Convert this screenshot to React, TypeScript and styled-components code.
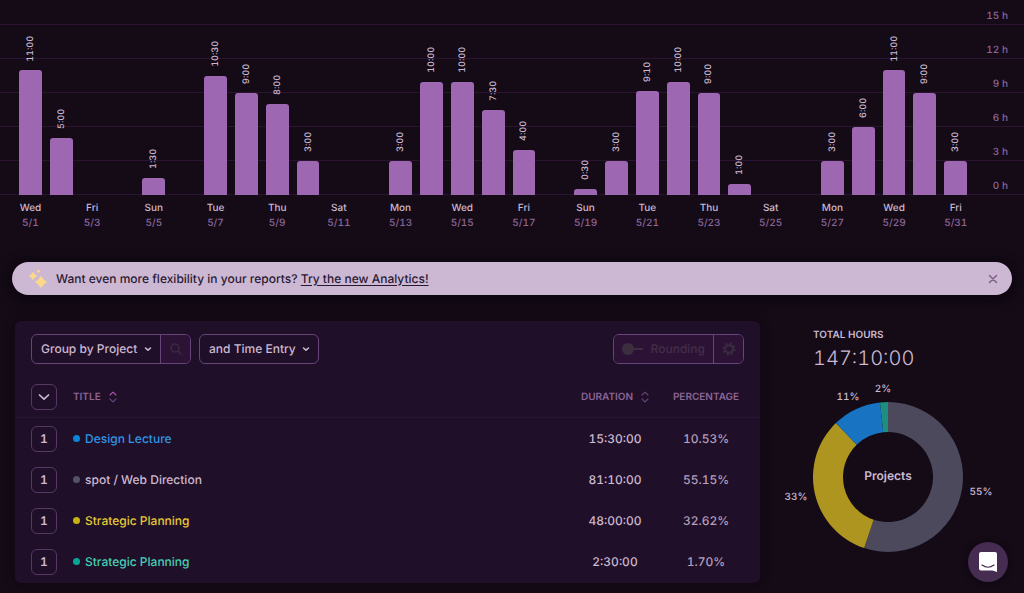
import React from "react";
import styled, { createGlobalStyle } from "styled-components";

const GlobalStyle = createGlobalStyle`
  *, *::before, *::after { box-sizing: border-box; }
  body {
    margin: 0;
    background: #140b17;
    color: #cbb9d2;
    font-family: Inter, "Liberation Sans", sans-serif;
    font-size: 12px;
    line-height: 16px;
    font-weight: 450;
    font-feature-settings: "tnum" 1;
    text-rendering: geometricPrecision;
    -webkit-font-smoothing: antialiased;
  }
  button, select, input { font: inherit; font-feature-settings: inherit; text-rendering: inherit; color: inherit; margin: 0; padding: 0; }
  button { cursor: pointer; }
`;

const Page = styled.main`
  display: flex;
  flex-direction: column;
`;

/* ---------- Bar chart ---------- */

const Chart = styled.section`
  display: flex;
  flex-direction: column;
  font-weight: 500;
`;

const Plot = styled.div`
  display: grid;
  grid-template: 195px / 1fr;
`;

const Scale = styled.div`
  grid-area: 1 / 1;
  display: flex;
  flex-direction: column;
`;

const ScaleLine = styled.div`
  display: flex;
  flex: 0 0 34px;
  align-items: flex-end;
  justify-content: flex-end;
  padding: 0 16px 0 0;
  border-bottom: 1px solid #2a1431;
  color: #8c6597;
  font-size: 10px;

  &:first-child { flex-basis: 25px; }
`;

const Bars = styled.div`
  grid-area: 1 / 1;
  display: flex;
  align-items: flex-end;
  align-self: end;
  height: 170px;
  padding: 0 53px 0 15px;
`;

const BarSlot = styled.div`
  display: flex;
  flex: 1 1 0;
  flex-direction: column;
  align-items: center;
  justify-content: flex-end;
  height: 100%;
  padding: 0 4px;
`;

const BarLabel = styled.span`
  writing-mode: vertical-rl;
  transform: rotate(180deg);
  margin-bottom: 9px;
  font-size: 9px;
  line-height: 13px;
`;

const Bar = styled.div`
  flex: none;
  width: 100%;
  border-radius: 3px 3px 0 0;
  background: #9e67b1;
`;

const Days = styled.div`
  display: flex;
  padding: 6px 53px 0 15px;
`;

const Day = styled.div`
  display: flex;
  flex: 1 1 0;
  flex-direction: column;
  align-items: center;
  min-width: 0;
  min-height: 30px;
  font-size: 10px;
  line-height: 15px;
  white-space: nowrap;
`;

const DayDate = styled.span`
  color: #8c6597;
`;

/* ---------- Banner ---------- */

const Banner = styled.section`
  display: flex;
  align-items: center;
  height: 33px;
  margin: 31px 12px 0;
  padding: 0 14px 0 16px;
  border-radius: 17px;
  background: #cdb8d4;
  color: #2a1832;
  box-shadow: 0 2px 12px 3px #0c050e;
`;

const BannerText = styled.p`
  flex: 1;
  margin: 0 0 0 8px;
`;

const BannerLink = styled.a`
  color: inherit;
  text-decoration: underline;
  text-underline-offset: 2px;
`;

const CloseButton = styled.button`
  display: flex;
  border: 0;
  background: none;
  color: #86618f;
`;

/* ---------- Report card ---------- */

const Report = styled.div`
  display: flex;
  align-items: flex-start;
  padding: 26px 0 10px 15px;
`;

const Card = styled.section`
  flex: 1;
  min-width: 0;
  padding-bottom: 1px;
  border-radius: 6px;
  background: #200f28;
  box-shadow: 0 0 8px 2px #110813;
`;

const Toolbar = styled.div`
  display: flex;
  align-items: center;
  gap: 8px;
  padding: 13px 16px;
`;

const Spacer = styled.div`
  flex: 1;
`;

const Group = styled.div`
  display: flex;
  height: 30px;
  border: 1px solid #67447a;
  border-radius: 6px;
  overflow: hidden;
`;

const SelectWrap = styled.div`
  display: grid;
  align-items: center;
`;

const Select = styled.select<{ $width: number }>`
  grid-area: 1 / 1;
  width: ${(p) => p.$width}px;
  height: 28px;
  padding: 0 18px 0 9px;
  border: 0;
  outline: 0;
  appearance: none;
  background: transparent;
`;

const SelectArrow = styled.svg`
  grid-area: 1 / 1;
  justify-self: end;
  margin-right: 8px;
  pointer-events: none;
`;

const IconButton = styled.button`
  display: flex;
  align-items: center;
  justify-content: center;
  width: 30px;
  border: 0;
  border-left: 1px solid #67447a;
  background: #2c1335;
  color: #3b2b40;
`;

const RoundingLabel = styled.label`
  display: flex;
  align-items: center;
  gap: 8px;
  padding: 0 8px;
  background: #2c1335;
  color: #432e49;
`;

const Toggle = styled.input`
  display: flex;
  align-items: center;
  width: 21px;
  height: 12px;
  appearance: none;
  background: linear-gradient(#3b2e3e, #3b2e3e) no-repeat right center / 12px 2px;

  &::before {
    content: "";
    width: 12px;
    height: 12px;
    border-radius: 50%;
    background: #3b2e3e;
  }
`;

const Table = styled.table`
  width: 100%;
  border-collapse: separate;
  border-spacing: 0;
  table-layout: fixed;
`;

const HeadCell = styled.th<{ $width?: number; $align?: string }>`
  width: ${(p) => (p.$width ? `${p.$width}px` : "auto")};
  height: 41px;
  padding: 0;
  border-bottom: 1px solid #2b1534;
  color: #8c6597;
  font-size: 10px;
  font-weight: 600;
  text-align: ${(p) => p.$align ?? "left"};

  &:first-child { padding-left: 16px; }
  &:last-child { padding-right: 9px; }
`;

const SortButton = styled.button`
  display: inline-flex;
  align-items: center;
  gap: 8px;
  border: 0;
  background: none;
`;

const Cell = styled.td<{ $align?: string; $muted?: boolean }>`
  height: 41px;
  padding: 0;
  color: ${(p) => (p.$muted ? "#b49fbd" : "#cbb9d2")};
  text-align: ${(p) => p.$align ?? "left"};

  &:first-child { padding-left: 16px; }
  &:last-child { padding-right: 9px; }
`;

const CountButton = styled.button`
  display: flex;
  align-items: center;
  justify-content: center;
  width: 26px;
  height: 26px;
  border: 1px solid #553963;
  border-radius: 6px;
  background: none;
  font-weight: 600;
`;

const ProjectName = styled.span<{ $color: string; $dot: string }>`
  display: flex;
  align-items: center;
  gap: 5px;
  color: ${(p) => p.$color};

  &::before {
    content: "";
    width: 7px;
    height: 7px;
    border-radius: 50%;
    background: ${(p) => p.$dot};
  }
`;

/* ---------- Totals ---------- */

const Totals = styled.aside`
  flex: none;
  width: 264px;
  padding: 6px 0 0 53px;
`;

const TotalsTitle = styled.h2`
  margin: 0;
  font-size: 10px;
  line-height: 16px;
  font-weight: 600;
`;

const TotalsValue = styled.p`
  margin: 3px 0 32px;
  font-size: 20px;
  line-height: 24px;
  font-weight: 300;
`;

const Donut = styled.svg`
  display: block;
  overflow: visible;
  font-size: 10px;
  font-weight: 500;
  fill: #cbb9d2;
`;

const DonutTitle = styled.text`
  font-size: 12px;
  font-weight: 600;
`;

const ChatButton = styled.button`
  position: fixed;
  right: 16px;
  bottom: 11px;
  display: flex;
  align-items: center;
  justify-content: center;
  width: 40px;
  height: 40px;
  border: 0;
  border-radius: 50%;
  background: #452c50;
  box-shadow: 0 1px 6px #0c050e;
`;

const weekdays = ["Wed", "Thu", "Fri", "Sat", "Sun", "Mon", "Tue"];

const durations: Record<number, string> = {
  1: "11:00", 2: "5:00", 5: "1:30", 7: "10:30", 8: "9:00", 9: "8:00", 10: "3:00",
  13: "3:00", 14: "10:00", 15: "10:00", 16: "7:30", 17: "4:00", 19: "0:30",
  20: "3:00", 21: "9:10", 22: "10:00", 23: "9:00", 24: "1:00", 27: "3:00",
  28: "6:00", 29: "11:00", 30: "9:00", 31: "3:00",
};

const days = Array.from({ length: 31 }, (_, i) => i + 1);

const toHours = (value: string) => {
  const [h, m] = value.split(":").map(Number);
  return h + m / 60;
};

const projects = [
  { name: "Design Lecture", color: "#2f95e6", dot: "#0b83d9", duration: "15:30:00", share: "10.53%" },
  { name: "spot / Web Direction", color: "#cbb9d2", dot: "#525266", duration: "81:10:00", share: "55.15%" },
  { name: "Strategic Planning", color: "#e3cb35", dot: "#c7af14", duration: "48:00:00", share: "32.62%" },
  { name: "Strategic Planning", color: "#45cfb6", dot: "#06a893", duration: "2:30:00", share: "1.70%" },
];

const slices = [
  { share: 55.15, color: "#4c495c" },
  { share: 32.62, color: "#ae951f" },
  { share: 10.53, color: "#1874c2" },
  { share: 1.7, color: "#1d8f80" },
];

const shareLabels = [
  { text: "55%", x: 168, y: 93 },
  { text: "33%", x: -17, y: 98 },
  { text: "11%", x: 35, y: -2 },
  { text: "2%", x: 70, y: -10 },
];

const point = (radius: number, share: number) => {
  const a = (share / 100) * Math.PI * 2;
  return `${75 + radius * Math.sin(a)} ${75 - radius * Math.cos(a)}`;
};

const slicePath = (from: number, to: number) => {
  const large = to - from > 50 ? 1 : 0;
  return `M${point(75, from)} A75 75 0 ${large} 1 ${point(75, to)} L${point(45, to)} A45 45 0 ${large} 0 ${point(45, from)} Z`;
};

function Arrow() {
  return (
    <SelectArrow width="8" height="8" viewBox="0 0 8 8" fill="none" stroke="#cbb9d2" strokeWidth="1.6" strokeLinecap="round" strokeLinejoin="round" aria-hidden="true">
      <path d="M1.5 3L4 5.2 6.5 3" />
    </SelectArrow>
  );
}

function SortIcon({ active }: { active?: boolean }) {
  return (
    <svg width="8" height="12" viewBox="0 0 8 12" fill="none" strokeWidth="1.1" strokeLinecap="round" strokeLinejoin="round" aria-hidden="true">
      <path d="M1 4L4 1.2 7 4" stroke={active ? "#b74fb4" : "#67447a"} />
      <path d="M1 8L4 10.8 7 8" stroke="#67447a" />
    </svg>
  );
}

export default function App() {
  let start = 0;
  return (
    <Page>
      <GlobalStyle />
      <Chart aria-label="Hours per day">
        <Plot>
          <Scale>
            {[15, 12, 9, 6, 3, 0].map((h) => (
              <ScaleLine key={h}>{h} h</ScaleLine>
            ))}
          </Scale>
          <Bars>
            {days.map((d) => (
              <BarSlot key={d}>
                {durations[d] && (
                  <>
                    <BarLabel>{durations[d]}</BarLabel>
                    <Bar style={{ height: `${(toHours(durations[d]) / 15) * 100}%` }} />
                  </>
                )}
              </BarSlot>
            ))}
          </Bars>
        </Plot>
        <Days>
          {days.map((d) => (
            <Day key={d}>
              {d % 2 === 1 && (
                <>
                  <span>{weekdays[(d - 1) % 7]}</span>
                  <DayDate>5/{d}</DayDate>
                </>
              )}
            </Day>
          ))}
        </Days>
      </Chart>

      <Banner>
        <svg width="20" height="20" viewBox="0 0 20 20" fill="#fbd98a" stroke="#fbd98a" strokeLinejoin="round" aria-hidden="true">
          <path d="M13 7.500Q15 11 18.500 13 15 15 13 18.500 11 15 7.500 13 11 11 13 7.500Z" />
          <path d="M5 3.500Q6.200 5.800 8.500 7 6.200 8.200 5 10.500 3.800 8.200 1.500 7 3.800 5.800 5 3.500Z" />
          <path d="M10.500 .7L12 2.200 10.500 3.700 9 2.200Z" strokeWidth=".6" />
        </svg>
        <BannerText>
          Want even more flexibility in your reports? <BannerLink href="#analytics">Try the new Analytics!</BannerLink>
        </BannerText>
        <CloseButton aria-label="Dismiss">
          <svg width="10" height="10" viewBox="0 0 10 10" stroke="currentColor" strokeWidth="1.6" strokeLinecap="round" aria-hidden="true">
            <path d="M1.500 1.500L8.500 8.500M8.500 1.500L1.500 8.500" />
          </svg>
        </CloseButton>
      </Banner>

      <Report>
        <Card>
          <Toolbar>
            <Group>
              <SelectWrap>
                <Select $width={128} aria-label="Group by">
                  <option>Group by Project</option>
                </Select>
                <Arrow />
              </SelectWrap>
              <IconButton aria-label="Search">
                <svg width="12" height="12" viewBox="0 0 12 12" fill="none" stroke="currentColor" strokeWidth="1.500" strokeLinecap="round" aria-hidden="true">
                  <circle cx="5" cy="5" r="4" />
                  <path d="M8.200 8.200L11 11" />
                </svg>
              </IconButton>
            </Group>
            <Group>
              <SelectWrap>
                <Select $width={118} aria-label="Then by">
                  <option>and Time Entry</option>
                </Select>
                <Arrow />
              </SelectWrap>
            </Group>
            <Spacer />
            <Group>
              <RoundingLabel>
                <Toggle type="checkbox" disabled />
                Rounding
              </RoundingLabel>
              <IconButton aria-label="Rounding settings" disabled>
                <svg width="14" height="14" viewBox="0 0 14 14" fill="none" stroke="currentColor" aria-hidden="true">
                  <circle cx="7" cy="7" r="3.800" strokeWidth="2" />
                  <circle cx="7" cy="7" r="5.500" strokeWidth="2" strokeDasharray="2.160 2.160" />
                </svg>
              </IconButton>
            </Group>
          </Toolbar>

          <Table>
            <thead>
              <tr>
                <HeadCell $width={58}>
                  <CountButton aria-label="Expand all">
                    <svg width="12" height="12" viewBox="0 0 12 12" fill="none" stroke="#cbb9d2" strokeWidth="1.700" strokeLinecap="round" strokeLinejoin="round" aria-hidden="true">
                      <path d="M1.500 4L6 8.200 10.500 4" />
                    </svg>
                  </CountButton>
                </HeadCell>
                <HeadCell>
                  <SortButton>TITLE <SortIcon active /></SortButton>
                </HeadCell>
                <HeadCell $width={92} $align="center">
                  <SortButton>DURATION <SortIcon /></SortButton>
                </HeadCell>
                <HeadCell $width={99} $align="center">PERCENTAGE</HeadCell>
              </tr>
            </thead>
            <tbody>
              {projects.map((p) => (
                <tr key={p.duration}>
                  <Cell><CountButton>1</CountButton></Cell>
                  <Cell><ProjectName $color={p.color} $dot={p.dot}>{p.name}</ProjectName></Cell>
                  <Cell $align="center">{p.duration}</Cell>
                  <Cell $align="center" $muted>{p.share}</Cell>
                </tr>
              ))}
            </tbody>
          </Table>
        </Card>

        <Totals>
          <TotalsTitle>TOTAL HOURS</TotalsTitle>
          <TotalsValue>147:10:00</TotalsValue>
          <Donut width="150" height="150" viewBox="0 0 150 150" role="img" aria-label="Share of hours by project">
            {slices.map((s) => {
              const from = start;
              start += s.share;
              return <path key={s.color} d={slicePath(from, start)} fill={s.color} />;
            })}
            <DonutTitle x="75" y="78" textAnchor="middle">Projects</DonutTitle>
            {shareLabels.map((l) => (
              <text key={l.text} x={l.x} y={l.y} textAnchor="middle">{l.text}</text>
            ))}
          </Donut>
        </Totals>
      </Report>

      <ChatButton aria-label="Open chat">
        <svg width="20" height="22" viewBox="0 0 20 22" aria-hidden="true">
          <path d="M3 1H17Q19 1 19 3V21L14.500 19.500H3Q1 19.500 1 17.500V3Q1 1 3 1Z" fill="#fff" />
          <path d="M4 14Q10 18.500 16 14" fill="none" stroke="#452c50" strokeWidth="1.200" strokeLinecap="round" />
        </svg>
      </ChatButton>
    </Page>
  );
}
